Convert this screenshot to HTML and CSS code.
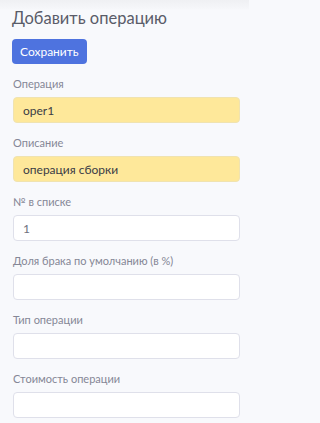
FILE: index.html
```html
<!DOCTYPE html>
<html lang="ru">
<head>
<meta charset="utf-8">
<link rel="stylesheet" href="styles.css">
</head>
<body>
<div class="page">
  <h1 class="title">Добавить операцию</h1>
  <button class="btn" type="button">Сохранить</button>
  <form class="form">
    <div class="group">
      <label class="label">Операция</label>
      <input class="input filled" type="text" value="oper1">
    </div>
    <div class="group">
      <label class="label">Описание</label>
      <input class="input filled" type="text" value="операция сборки">
    </div>
    <div class="group">
      <label class="label">№ в списке</label>
      <input class="input plain" type="text" value="1">
    </div>
    <div class="group">
      <label class="label">Доля брака по умолчанию (в %)</label>
      <input class="input" type="text" value="">
    </div>
    <div class="group">
      <label class="label">Тип операции</label>
      <input class="input" type="text" value="">
    </div>
    <div class="group">
      <label class="label">Стоимость операции</label>
      <input class="input" type="text" value="">
    </div>
  </form>
</div>
</body>
</html>
```
FILE: styles.css
```css
html, body {
  margin: 0;
  padding: 0;
  background: #f8f9fc;
  font-family: "Lato", "Noto Sans", sans-serif;
}
.page {
  width: 249px;
  padding: 6px 9px 0 13px;
  background: linear-gradient(#eff0f3 0, #f5f6f9 8px, #f8f9fc 10px);
  min-height: 423px;
  box-sizing: border-box;
}
.title {
  margin: 0 0 0 -1px;
  font-size: 16.5px;
  line-height: 24px;
  font-weight: 400;
  color: #5a5c69;
  white-space: nowrap;
}
.btn {
  display: block;
  margin: 9px 0 0 -1px;
  height: 25px;
  padding: 0 8px;
  border: none;
  border-radius: 4px;
  background: #4e73df;
  color: #fff;
  font-family: inherit;
  font-size: 12px;
}
.form {
  margin-top: 12px;
}
.group {
  display: flex;
  flex-direction: column;
  gap: 5px;
  margin-bottom: 12px;
}
.label {
  font-size: 11px;
  line-height: 16px;
  color: #858796;
  white-space: nowrap;
}
.input {
  box-sizing: border-box;
  width: 100%;
  height: 26px;
  margin: 0;
  padding: 0 9px;
  border: 1px solid #dfe0ea;
  border-radius: 4px;
  background: #fff;
  font-family: inherit;
  font-size: 12px;
  color: #6e707e;
}
.input.filled {
  background: #fee89a;
  border-color: #f0e3b0;
  color: #3a3b45;
}
```
